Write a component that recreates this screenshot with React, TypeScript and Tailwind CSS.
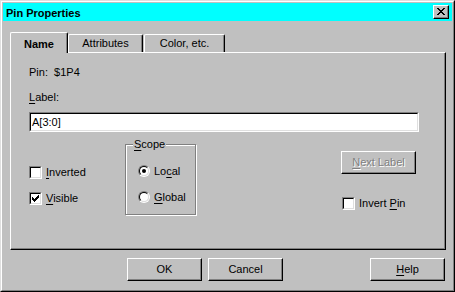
import React from "react";

const U = ({ children }: { children: React.ReactNode }) => (
  <span className="underline underline-offset-[2px]">{children}</span>
);

const CHECK: [number, number][] = [
  [6, 0],
  [5, 1], [6, 1],
  [0, 2], [4, 2], [5, 2], [6, 2],
  [0, 3], [1, 3], [3, 3], [4, 3], [5, 3],
  [0, 4], [1, 4], [2, 4], [3, 4], [4, 4],
  [1, 5], [2, 5], [3, 5],
  [2, 6],
];

const XMARK: [number, number][] = [
  [0, 0], [1, 0], [6, 0], [7, 0],
  [1, 1], [2, 1], [5, 1], [6, 1],
  [2, 2], [3, 2], [4, 2], [5, 2],
  [3, 3], [4, 3],
  [2, 4], [3, 4], [4, 4], [5, 4],
  [1, 5], [2, 5], [5, 5], [6, 5],
  [0, 6], [1, 6], [6, 6], [7, 6],
];

function Pixels({ pts, w, h }: { pts: [number, number][]; w: number; h: number }) {
  return (
    <svg width={w} height={h} viewBox={`0 0 ${w} ${h}`} shapeRendering="crispEdges" className="block">
      {pts.map(([x, y], i) => (
        <rect key={i} x={x} y={y} width={1} height={1} fill="#000" />
      ))}
    </svg>
  );
}

function Check({ checked }: { checked?: boolean }) {
  return (
    <div className="w-[13px] h-[13px] shrink-0 border border-t-[#808080] border-l-[#808080] border-r-white border-b-white">
      <div className="w-full h-full border border-t-black border-l-black border-r-[#dfdfdf] border-b-[#dfdfdf] bg-white pl-[1px] pt-[1px]">
        {checked && <Pixels pts={CHECK} w={7} h={7} />}
      </div>
    </div>
  );
}

function Radio({ on }: { on?: boolean }) {
  return (
    <div className="w-[12px] h-[12px] shrink-0 rounded-full border border-t-[#808080] border-l-[#808080] border-r-white border-b-white">
      <div className="w-full h-full rounded-full border border-t-black border-l-black border-r-[#dfdfdf] border-b-[#dfdfdf] bg-white flex items-center justify-center">
        {on && <div className="w-[4px] h-[4px] rounded-full bg-black" />}
      </div>
    </div>
  );
}

function Btn({
  children,
  className = "",
  disabled,
}: {
  children: React.ReactNode;
  className?: string;
  disabled?: boolean;
}) {
  return (
    <div
      className={
        "w-[75px] h-[23px] shrink-0 bg-[#c0c0c0] border border-t-white border-l-white border-r-black border-b-black shadow-[inset_-1px_-1px_0_#808080] flex items-center justify-center " +
        (disabled ? "text-[#808080] [text-shadow:1px_1px_0_#ffffff] " : "") +
        className
      }
    >
      <span>{children}</span>
    </div>
  );
}

export default function App() {
  return (
    <div className="w-[455px] h-[292px] bg-[#c0c0c0] font-['Liberation_Sans',Arial,sans-serif] text-[11px] leading-[13px] text-black select-none">
      <div className="w-full h-full border border-t-[#dfdfdf] border-l-[#dfdfdf] border-r-black border-b-black">
        <div className="w-full h-full border border-t-white border-l-white border-r-[#808080] border-b-[#808080] p-px flex flex-col">
          {/* Title bar */}
          <div className="h-[18px] shrink-0 bg-[#00ffff] flex items-start justify-between pl-[3px] pr-[3px]">
            <span className="font-bold mt-[4px]">Pin Properties</span>
            <div className="mt-[2px] w-[16px] h-[14px] bg-[#c0c0c0] border border-t-white border-l-white border-r-black border-b-black shadow-[inset_-1px_-1px_0_#808080] pl-[3px] pt-[2px]">
              <Pixels pts={XMARK} w={8} h={7} />
            </div>
          </div>

          {/* Body */}
          <div className="flex flex-col pl-[7px] pr-[6px] pt-[11px]">
            {/* Tabs */}
            <div className="relative z-10 flex items-end h-[20px]">
              <div className="w-[58px] h-[21px] -mb-[1px] bg-[#c0c0c0] border-l border-t border-r border-l-white border-t-white border-r-black rounded-tl-[2px] rounded-tr-[2px] shadow-[inset_-1px_0_0_#808080] pt-[5px] text-center font-bold">
                Name
              </div>
              <div className="w-[75px] h-[18px] bg-[#c0c0c0] border-l border-t border-r border-l-white border-t-white border-r-black rounded-tl-[2px] rounded-tr-[2px] shadow-[inset_-1px_0_0_#808080] pt-[2px] text-center">
                Attributes
              </div>
              <div className="ml-[1px] w-[81px] h-[18px] bg-[#c0c0c0] border-l border-t border-r border-l-white border-t-white border-r-black rounded-tl-[2px] rounded-tr-[2px] shadow-[inset_-1px_0_0_#808080] pt-[2px] text-center">
                Color, etc.
              </div>
            </div>

            {/* Panel */}
            <div className="h-[198px] border border-t-white border-l-white border-r-black border-b-black shadow-[inset_-1px_-1px_0_#808080] flex flex-col pl-[18px] pt-[13px]">
              <div className="whitespace-pre">Pin:  $1P4</div>
              <div className="mt-[12px]">
                <U>L</U>abel:
              </div>
              <div className="mt-[8px] w-[390px] h-[20px] border border-t-[#808080] border-l-[#808080] border-r-white border-b-white">
                <div className="w-full h-full border border-t-black border-l-black border-r-[#dfdfdf] border-b-[#dfdfdf] bg-white flex items-center pl-[1px]">
                  A[3:0]
                </div>
              </div>

              <div className="mt-[12px] flex items-start">
                {/* left column */}
                <div className="w-[96px] shrink-0 pt-[22px] flex flex-col gap-[13px]">
                  <div className="h-[13px] flex items-center gap-[4px]">
                    <Check />
                    <span>
                      <U>I</U>nverted
                    </span>
                  </div>
                  <div className="h-[13px] flex items-center gap-[4px]">
                    <Check checked />
                    <span>
                      <U>V</U>isible
                    </span>
                  </div>
                </div>

                {/* Scope group */}
                <div className="relative w-[71px] h-[71px] shrink-0 border border-[#808080] shadow-[inset_1px_1px_0_#ffffff,1px_1px_0_#ffffff] pl-[12px] pt-[20px] flex flex-col gap-[14px]">
                  <span className="absolute -top-[7px] left-[7px] px-[1px] bg-[#c0c0c0]">
                    <U>S</U>cope
                  </span>
                  <div className="h-[12px] flex items-center gap-[4px]">
                    <Radio on />
                    <span>
                      Lo<U>c</U>al
                    </span>
                  </div>
                  <div className="h-[12px] flex items-center gap-[4px]">
                    <Radio />
                    <span>
                      <U>G</U>lobal
                    </span>
                  </div>
                </div>

                {/* right column */}
                <div className="ml-[145px] pt-[7px] flex flex-col">
                  <Btn disabled>
                    <U>N</U>ext Label
                  </Btn>
                  <div className="mt-[23px] pl-[1px] h-[13px] flex items-center gap-[4px]">
                    <Check />
                    <span>
                      Invert <U>P</U>in
                    </span>
                  </div>
                </div>
              </div>
            </div>

            {/* Footer buttons */}
            <div className="mt-[8px] flex">
              <Btn className="ml-[117px]">OK</Btn>
              <Btn className="ml-[6px]">Cancel</Btn>
              <Btn className="ml-auto mr-[1px]">
                <U>H</U>elp
              </Btn>
            </div>
          </div>
        </div>
      </div>
    </div>
  );
}
